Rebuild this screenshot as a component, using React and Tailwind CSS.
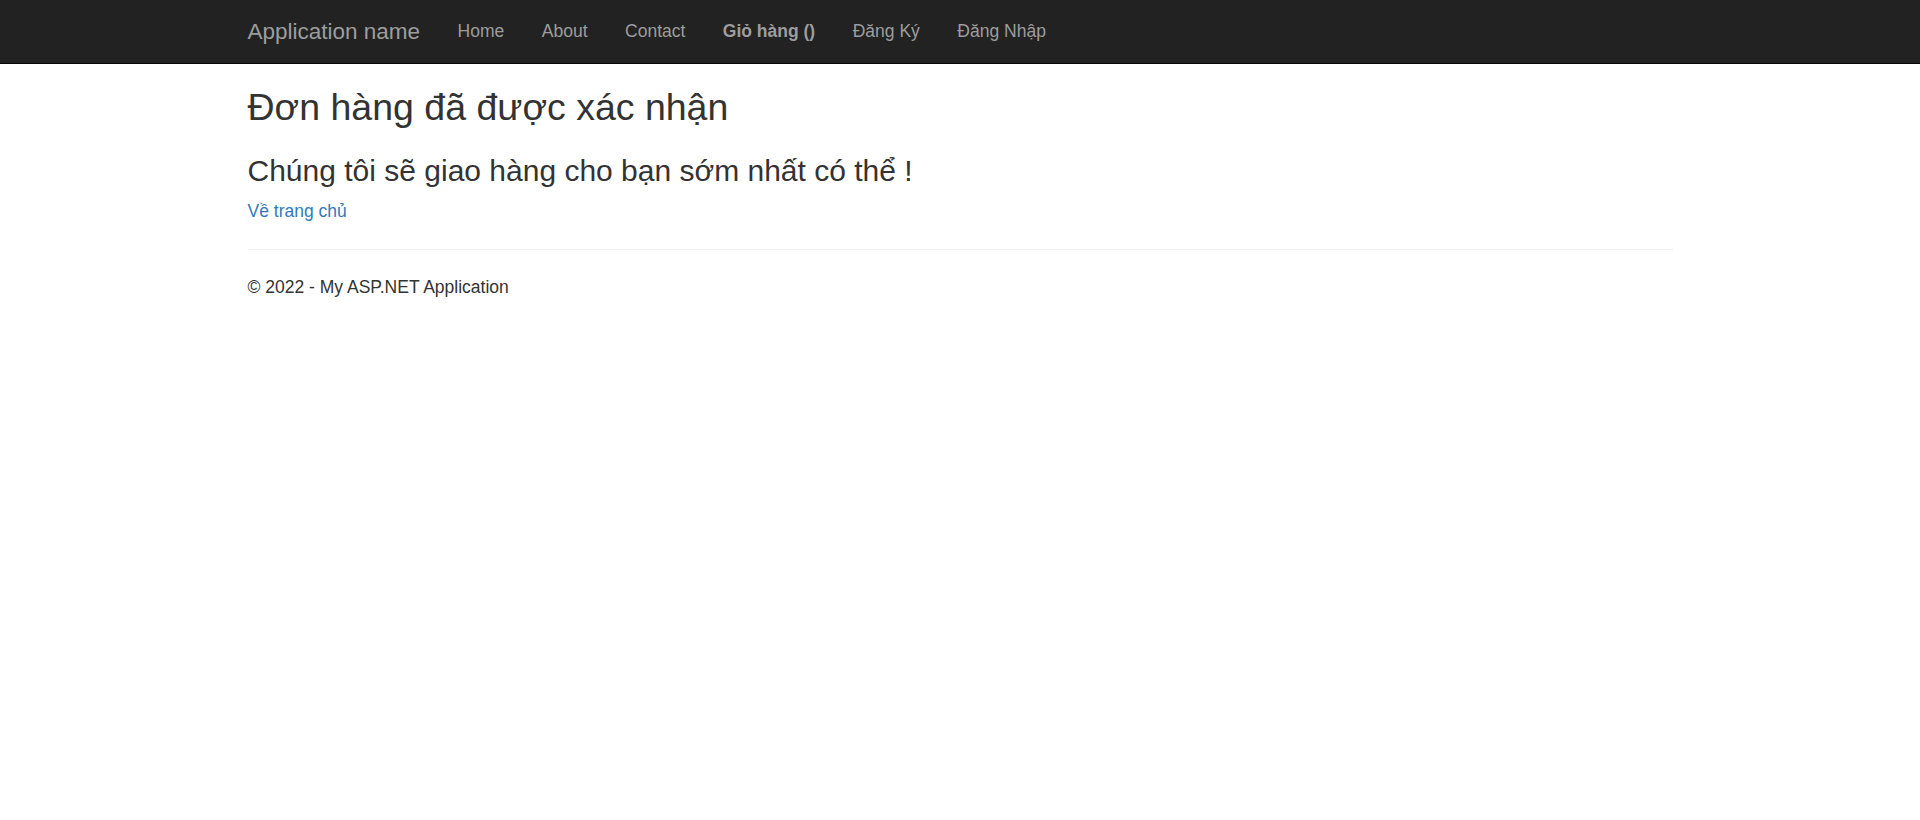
export default function App() {
  const links = ["Home", "About", "Contact"];
  return (
    <div className="min-h-[820px] bg-white text-[#333] text-[17.5px] leading-[25px]" style={{ fontFamily: '"Liberation Sans", Arial, Helvetica, sans-serif' }}>
      <nav className="h-[63.75px] bg-[#222] border-b border-[#080808]">
        <div className="w-[1462.5px] mx-auto px-[18.75px] flex">
          <a className="-ml-[18.75px] h-[62.5px] px-[18.75px] py-[18.75px] text-[22.5px] leading-[25px] text-[#9d9d9d]">Application name</a>
          <ul className="flex">
            {links.map((l) => (
              <li key={l}>
                <a className="block px-[18.75px] py-[18.75px] text-[#9d9d9d]">{l}</a>
              </li>
            ))}
            <li>
              <a className="block px-[18.75px] py-[18.75px] text-[#9d9d9d] font-bold">Giỏ hàng ()</a>
            </li>
            <li>
              <a className="block px-[18.75px] py-[18.75px] text-[#9d9d9d]">Đăng Ký</a>
            </li>
            <li>
              <a className="block px-[18.75px] py-[18.75px] text-[#9d9d9d]">Đăng Nhập</a>
            </li>
          </ul>
        </div>
      </nav>
      <div className="w-[1462.5px] mx-auto px-[18.75px] pt-px">
        <h2 className="mt-[22.5px] mb-[12.5px] text-[37.5px] leading-[1.1] font-normal">Đơn hàng đã được xác nhận</h2>
        <h3 className="mt-[25px] mb-[12.5px] text-[30px] leading-[1.1] font-normal">Chúng tôi sẽ giao hàng cho bạn sớm nhất có thể !</h3>
        <p className="mb-[12.5px]">
          <a className="text-[#337ab7]">Về trang chủ</a>
        </p>
        <hr className="mt-[25px] mb-[25px] border-0 border-t border-[#eee]" />
        <footer>
          <p className="mb-[12.5px]">© 2022 - My ASP.NET Application</p>
        </footer>
      </div>
    </div>
  );
}
